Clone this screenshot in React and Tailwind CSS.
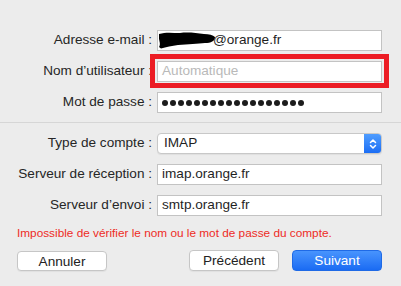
import { useState } from "react";

const Row = ({ label, children }) => (
  <div className="flex items-center h-[21px]">
    <label className="w-[152px] shrink-0 text-right text-[13.6px] text-[#262626] whitespace-nowrap">
      {label}
    </label>
    <div className="ml-[5px] w-[225px] h-full relative">{children}</div>
  </div>
);

const Field = ({ children, className = "" }) => (
  <div
    className={`h-full w-full bg-white border border-[#c3c3c3] flex items-center pl-[4px] text-[13.6px] text-[#1f1f1f] ${className}`}
  >
    {children}
  </div>
);

const Scribble = () => (
  <svg width="58" height="17" viewBox="0 0 58 17" className="-ml-[4px] shrink-0">
    <path
      d="M1 2 C8 0 14 1 22 1 C30 0 38 1 46 2 C51 2 55 3 57 5 C57 9 53 11 47 11 C40 12 30 12 20 13 C14 14 8 15 3 16.5 L1 15 C3 12 1 9 1 6 Z"
      fill="#000"
    />
  </svg>
);

const Dots = ({ count }) => (
  <div className="flex gap-[2px]">
    {Array.from({ length: count }).map((_, i) => (
      <span key={i} className="w-[6px] h-[6px] rounded-full bg-[#1c1c1c]" />
    ))}
  </div>
);

export default function App() {
  const [type] = useState("IMAP");

  return (
    <div className="w-[401px] h-[286px] bg-[#ececec] font-['Liberation_Sans',Arial,sans-serif] overflow-hidden">
      <div className="pt-[30px] flex flex-col gap-[10px]">
        <Row label="Adresse e-mail :">
          <Field className="pl-0">
            <Scribble />
            <span className="-ml-[3px]">@orange.fr</span>
          </Field>
        </Row>
        <Row label="Nom d’utilisateur :">
          <Field>
            <span className="text-[#b9b9b9]">Automatique</span>
          </Field>
          <div className="absolute -left-[7px] -right-[7px] -top-[7px] -bottom-[6px] border-[5px] border-[#ec1c24] pointer-events-none" />
        </Row>
        <Row label="Mot de passe :">
          <Field>
            <Dots count={18} />
          </Field>
        </Row>
      </div>

      <div className="mt-[9px] h-px bg-[#d6d6d6]" />

      <div className="mt-[10px] flex flex-col gap-[10px]">
        <Row label="Type de compte :">
          <div className="h-full w-full flex bg-white border border-[#c8c8c8] rounded-[4px] overflow-hidden shadow-[0_1px_1px_rgba(0,0,0,0.06)]">
            <span className="flex-1 flex items-center pl-[6px] text-[13.6px] text-[#1f1f1f]">{type}</span>
            <span className="w-[17px] flex items-center justify-center bg-gradient-to-b from-[#4f9dff] to-[#1b6df4]">
              <svg width="8" height="12" viewBox="0 0 8 12" fill="none" stroke="#fff" strokeWidth="1.5" strokeLinecap="round" strokeLinejoin="round">
                <path d="M1.5 4.5 L4 2 L6.5 4.5" />
                <path d="M1.5 7.5 L4 10 L6.5 7.5" />
              </svg>
            </span>
          </div>
        </Row>
        <Row label="Serveur de réception :">
          <Field>imap.orange.fr</Field>
        </Row>
        <Row label="Serveur d’envoi :">
          <Field>smtp.orange.fr</Field>
        </Row>
      </div>

      <p className="mt-[10px] ml-[17px] text-[11.8px] leading-[14px] text-[#ee2b1f] whitespace-nowrap">
        Impossible de vérifier le nom ou le mot de passe du compte.
      </p>

      <div className="mt-[10px] flex items-center px-[17px] pr-[19px]">
        <button className="w-[90px] h-[20px] bg-white border border-[#c6c6c6] rounded-[4px] text-[13.6px] text-[#222] shadow-[0_1px_1px_rgba(0,0,0,0.05)]">
          Annuler
        </button>
        <button className="ml-auto w-[90px] h-[21px] bg-white border border-[#c6c6c6] rounded-[4px] text-[13.6px] text-[#222] shadow-[0_1px_1px_rgba(0,0,0,0.05)]">
          Précédent
        </button>
        <button className="ml-[13px] w-[90px] h-[21px] rounded-[4px] text-[13.6px] text-white bg-gradient-to-b from-[#4894fd] to-[#1a6bf3] border border-[#1f6ae6]">
          Suivant
        </button>
      </div>
    </div>
  );
}
